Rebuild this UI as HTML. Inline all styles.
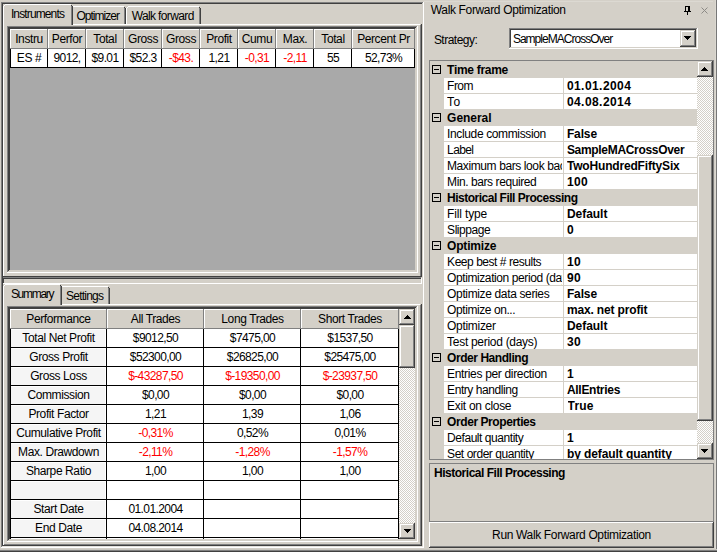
<!DOCTYPE html>
<html lang="en"><head><meta charset="utf-8"><title>Walk Forward Optimization</title>
<style>
html,body{margin:0;padding:0;background:#d4d0c8}
body{width:717px;height:552px;background:#d4d0c8;position:relative;overflow:hidden;
 font-family:"Liberation Sans",sans-serif;font-size:11px;color:#000}
.r{position:absolute}
.t{position:absolute;white-space:nowrap;font-size:12px;letter-spacing:-0.4px}
.clip{overflow:hidden}
.b{font-weight:bold;letter-spacing:-0.2px}
.red{color:#ff0000}
.num{letter-spacing:-0.6px}
.chk{background-image:repeating-conic-gradient(#fff 0% 25%,#d4d0c8 0% 50%);background-size:2px 2px}
</style></head>
<body>
<div class="r" style="left:1px;top:2px;width:1px;height:545px;background:#808080;"></div>
<div class="r" style="left:2px;top:3px;width:1px;height:543px;background:#404040;"></div>
<div class="r" style="left:1px;top:2px;width:422px;height:1px;background:#808080;"></div>
<div class="r" style="left:2px;top:3px;width:420px;height:1px;background:#404040;"></div>
<div class="r" style="left:423px;top:2px;width:1px;height:546px;background:#ffffff;"></div>
<div class="r" style="left:1px;top:547px;width:423px;height:1px;background:#ffffff;"></div>
<div class="r" style="left:2px;top:546px;width:421px;height:1px;background:#e6e3dd;"></div>
<div class="r" style="left:73px;top:24px;width:347px;height:1px;background:#ffffff;"></div>
<div class="r" style="left:3px;top:6px;width:1px;height:270px;background:#ffffff;"></div>
<div class="r" style="left:420px;top:25px;width:1px;height:251px;background:#808080;"></div>
<div class="r" style="left:421px;top:24px;width:1px;height:253px;background:#404040;"></div>
<div class="r" style="left:3px;top:276px;width:419px;height:1px;background:#404040;"></div>
<div class="r" style="left:5px;top:4px;width:66px;height:1px;background:#ffffff;"></div>
<div class="r" style="left:4px;top:5px;width:1px;height:1px;background:#ffffff;"></div>
<div class="r" style="left:71px;top:6px;width:1px;height:19px;background:#808080;"></div>
<div class="r" style="left:71px;top:5px;width:1px;height:1px;background:#404040;"></div>
<div class="r" style="left:72px;top:6px;width:1px;height:19px;background:#404040;"></div>
<div class="t " style="left:10.9px;top:7px;width:61.1px;height:15px;line-height:15px;text-align:left;letter-spacing:-0.87px;">Instruments</div>
<div class="r" style="left:73px;top:6px;width:51px;height:1px;background:#ffffff;"></div>
<div class="r" style="left:124px;top:8px;width:1px;height:16px;background:#808080;"></div>
<div class="r" style="left:124px;top:7px;width:1px;height:1px;background:#404040;"></div>
<div class="r" style="left:125px;top:8px;width:1px;height:16px;background:#404040;"></div>
<div class="t " style="left:76.4px;top:9px;width:48.599999999999994px;height:15px;line-height:15px;text-align:left;letter-spacing:-0.96px;">Optimizer</div>
<div class="r" style="left:128px;top:6px;width:71px;height:1px;background:#ffffff;"></div>
<div class="r" style="left:127px;top:7px;width:1px;height:1px;background:#ffffff;"></div>
<div class="r" style="left:126px;top:8px;width:1px;height:16px;background:#ffffff;"></div>
<div class="r" style="left:199px;top:8px;width:1px;height:16px;background:#808080;"></div>
<div class="r" style="left:199px;top:7px;width:1px;height:1px;background:#404040;"></div>
<div class="r" style="left:200px;top:8px;width:1px;height:16px;background:#404040;"></div>
<div class="t " style="left:131.7px;top:9px;width:68.30000000000001px;height:15px;line-height:15px;text-align:left;letter-spacing:-0.63px;">Walk forward</div>
<div class="r" style="left:10px;top:29px;width:405px;height:241px;background:#a9a9a9;"></div>
<div class="r" style="left:7px;top:26px;width:411px;height:1px;background:#808080;"></div>
<div class="r" style="left:8px;top:27px;width:409px;height:1px;background:#404040;"></div>
<div class="r" style="left:9px;top:28px;width:407px;height:1px;background:#404040;"></div>
<div class="r" style="left:7px;top:26px;width:1px;height:247px;background:#808080;"></div>
<div class="r" style="left:8px;top:27px;width:1px;height:245px;background:#404040;"></div>
<div class="r" style="left:9px;top:28px;width:1px;height:243px;background:#404040;"></div>
<div class="r" style="left:417px;top:26px;width:1px;height:247px;background:#ffffff;"></div>
<div class="r" style="left:7px;top:272px;width:411px;height:1px;background:#ffffff;"></div>
<div class="r" style="left:416px;top:27px;width:1px;height:245px;background:#d4d0c8;"></div>
<div class="r" style="left:415px;top:28px;width:1px;height:243px;background:#d4d0c8;"></div>
<div class="r" style="left:8px;top:271px;width:409px;height:1px;background:#d4d0c8;"></div>
<div class="r" style="left:9px;top:270px;width:407px;height:1px;background:#d4d0c8;"></div>
<div class="r" style="left:10px;top:29px;width:38px;height:20px;background:#d4d0c8;"></div>
<div class="r" style="left:10px;top:29px;width:1px;height:19px;background:#ffffff;"></div>
<div class="r" style="left:10px;top:29px;width:37px;height:1px;background:#ffffff;"></div>
<div class="r" style="left:47px;top:29px;width:1px;height:20px;background:#808080;"></div>
<div class="r" style="left:10px;top:48px;width:38px;height:1px;background:#808080;"></div>
<div class="t clip" style="left:11px;top:30px;width:36px;height:18px;line-height:18px;text-align:center;">Instru</div>
<div class="r" style="left:48px;top:29px;width:38px;height:20px;background:#d4d0c8;"></div>
<div class="r" style="left:48px;top:29px;width:1px;height:19px;background:#ffffff;"></div>
<div class="r" style="left:48px;top:29px;width:37px;height:1px;background:#ffffff;"></div>
<div class="r" style="left:85px;top:29px;width:1px;height:20px;background:#808080;"></div>
<div class="r" style="left:48px;top:48px;width:38px;height:1px;background:#808080;"></div>
<div class="t clip" style="left:49px;top:30px;width:36px;height:18px;line-height:18px;text-align:center;">Perfor</div>
<div class="r" style="left:86px;top:29px;width:38px;height:20px;background:#d4d0c8;"></div>
<div class="r" style="left:86px;top:29px;width:1px;height:19px;background:#ffffff;"></div>
<div class="r" style="left:86px;top:29px;width:37px;height:1px;background:#ffffff;"></div>
<div class="r" style="left:123px;top:29px;width:1px;height:20px;background:#808080;"></div>
<div class="r" style="left:86px;top:48px;width:38px;height:1px;background:#808080;"></div>
<div class="t clip" style="left:87px;top:30px;width:36px;height:18px;line-height:18px;text-align:center;">Total</div>
<div class="r" style="left:124px;top:29px;width:38px;height:20px;background:#d4d0c8;"></div>
<div class="r" style="left:124px;top:29px;width:1px;height:19px;background:#ffffff;"></div>
<div class="r" style="left:124px;top:29px;width:37px;height:1px;background:#ffffff;"></div>
<div class="r" style="left:161px;top:29px;width:1px;height:20px;background:#808080;"></div>
<div class="r" style="left:124px;top:48px;width:38px;height:1px;background:#808080;"></div>
<div class="t clip" style="left:125px;top:30px;width:36px;height:18px;line-height:18px;text-align:center;">Gross</div>
<div class="r" style="left:162px;top:29px;width:38px;height:20px;background:#d4d0c8;"></div>
<div class="r" style="left:162px;top:29px;width:1px;height:19px;background:#ffffff;"></div>
<div class="r" style="left:162px;top:29px;width:37px;height:1px;background:#ffffff;"></div>
<div class="r" style="left:199px;top:29px;width:1px;height:20px;background:#808080;"></div>
<div class="r" style="left:162px;top:48px;width:38px;height:1px;background:#808080;"></div>
<div class="t clip" style="left:163px;top:30px;width:36px;height:18px;line-height:18px;text-align:center;">Gross</div>
<div class="r" style="left:200px;top:29px;width:38px;height:20px;background:#d4d0c8;"></div>
<div class="r" style="left:200px;top:29px;width:1px;height:19px;background:#ffffff;"></div>
<div class="r" style="left:200px;top:29px;width:37px;height:1px;background:#ffffff;"></div>
<div class="r" style="left:237px;top:29px;width:1px;height:20px;background:#808080;"></div>
<div class="r" style="left:200px;top:48px;width:38px;height:1px;background:#808080;"></div>
<div class="t clip" style="left:201px;top:30px;width:36px;height:18px;line-height:18px;text-align:center;">Profit</div>
<div class="r" style="left:238px;top:29px;width:38px;height:20px;background:#d4d0c8;"></div>
<div class="r" style="left:238px;top:29px;width:1px;height:19px;background:#ffffff;"></div>
<div class="r" style="left:238px;top:29px;width:37px;height:1px;background:#ffffff;"></div>
<div class="r" style="left:275px;top:29px;width:1px;height:20px;background:#808080;"></div>
<div class="r" style="left:238px;top:48px;width:38px;height:1px;background:#808080;"></div>
<div class="t clip" style="left:239px;top:30px;width:36px;height:18px;line-height:18px;text-align:center;">Cumu</div>
<div class="r" style="left:276px;top:29px;width:38px;height:20px;background:#d4d0c8;"></div>
<div class="r" style="left:276px;top:29px;width:1px;height:19px;background:#ffffff;"></div>
<div class="r" style="left:276px;top:29px;width:37px;height:1px;background:#ffffff;"></div>
<div class="r" style="left:313px;top:29px;width:1px;height:20px;background:#808080;"></div>
<div class="r" style="left:276px;top:48px;width:38px;height:1px;background:#808080;"></div>
<div class="t clip" style="left:277px;top:30px;width:36px;height:18px;line-height:18px;text-align:center;">Max.</div>
<div class="r" style="left:314px;top:29px;width:38px;height:20px;background:#d4d0c8;"></div>
<div class="r" style="left:314px;top:29px;width:1px;height:19px;background:#ffffff;"></div>
<div class="r" style="left:314px;top:29px;width:37px;height:1px;background:#ffffff;"></div>
<div class="r" style="left:351px;top:29px;width:1px;height:20px;background:#808080;"></div>
<div class="r" style="left:314px;top:48px;width:38px;height:1px;background:#808080;"></div>
<div class="t clip" style="left:315px;top:30px;width:36px;height:18px;line-height:18px;text-align:center;">Total</div>
<div class="r" style="left:352px;top:29px;width:63px;height:20px;background:#d4d0c8;"></div>
<div class="r" style="left:352px;top:29px;width:1px;height:19px;background:#ffffff;"></div>
<div class="r" style="left:352px;top:29px;width:62px;height:1px;background:#ffffff;"></div>
<div class="r" style="left:414px;top:29px;width:1px;height:20px;background:#808080;"></div>
<div class="r" style="left:352px;top:48px;width:63px;height:1px;background:#808080;"></div>
<div class="t clip" style="left:353px;top:30px;width:61px;height:18px;line-height:18px;text-align:center;">Percent Pr</div>
<div class="r" style="left:10px;top:49px;width:38px;height:19px;background:#ffffff;"></div>
<div class="r" style="left:47px;top:49px;width:1px;height:19px;background:#000000;"></div>
<div class="r" style="left:10px;top:67px;width:38px;height:1px;background:#000000;"></div>
<div class="r" style="left:10px;top:49px;width:1px;height:19px;background:#000000;"></div>
<div class="t clip" style="left:11px;top:49px;width:36px;height:18px;line-height:18px;text-align:center;">ES #</div>
<div class="r" style="left:48px;top:49px;width:38px;height:19px;background:#ffffff;"></div>
<div class="r" style="left:85px;top:49px;width:1px;height:19px;background:#000000;"></div>
<div class="r" style="left:48px;top:67px;width:38px;height:1px;background:#000000;"></div>
<div class="t clip num" style="left:49px;top:49px;width:36px;height:18px;line-height:18px;text-align:center;">9012,</div>
<div class="r" style="left:86px;top:49px;width:38px;height:19px;background:#ffffff;"></div>
<div class="r" style="left:123px;top:49px;width:1px;height:19px;background:#000000;"></div>
<div class="r" style="left:86px;top:67px;width:38px;height:1px;background:#000000;"></div>
<div class="t clip num" style="left:87px;top:49px;width:36px;height:18px;line-height:18px;text-align:center;">$9.01</div>
<div class="r" style="left:124px;top:49px;width:38px;height:19px;background:#ffffff;"></div>
<div class="r" style="left:161px;top:49px;width:1px;height:19px;background:#000000;"></div>
<div class="r" style="left:124px;top:67px;width:38px;height:1px;background:#000000;"></div>
<div class="t clip num" style="left:125px;top:49px;width:36px;height:18px;line-height:18px;text-align:center;">$52.3</div>
<div class="r" style="left:162px;top:49px;width:38px;height:19px;background:#ffffff;"></div>
<div class="r" style="left:199px;top:49px;width:1px;height:19px;background:#000000;"></div>
<div class="r" style="left:162px;top:67px;width:38px;height:1px;background:#000000;"></div>
<div class="t clip red num" style="left:163px;top:49px;width:36px;height:18px;line-height:18px;text-align:center;">-$43.</div>
<div class="r" style="left:200px;top:49px;width:38px;height:19px;background:#ffffff;"></div>
<div class="r" style="left:237px;top:49px;width:1px;height:19px;background:#000000;"></div>
<div class="r" style="left:200px;top:67px;width:38px;height:1px;background:#000000;"></div>
<div class="t clip num" style="left:201px;top:49px;width:36px;height:18px;line-height:18px;text-align:center;">1,21</div>
<div class="r" style="left:238px;top:49px;width:38px;height:19px;background:#ffffff;"></div>
<div class="r" style="left:275px;top:49px;width:1px;height:19px;background:#000000;"></div>
<div class="r" style="left:238px;top:67px;width:38px;height:1px;background:#000000;"></div>
<div class="t clip red num" style="left:239px;top:49px;width:36px;height:18px;line-height:18px;text-align:center;">-0,31</div>
<div class="r" style="left:276px;top:49px;width:38px;height:19px;background:#ffffff;"></div>
<div class="r" style="left:313px;top:49px;width:1px;height:19px;background:#000000;"></div>
<div class="r" style="left:276px;top:67px;width:38px;height:1px;background:#000000;"></div>
<div class="t clip red num" style="left:277px;top:49px;width:36px;height:18px;line-height:18px;text-align:center;">-2,11</div>
<div class="r" style="left:314px;top:49px;width:38px;height:19px;background:#ffffff;"></div>
<div class="r" style="left:351px;top:49px;width:1px;height:19px;background:#000000;"></div>
<div class="r" style="left:314px;top:67px;width:38px;height:1px;background:#000000;"></div>
<div class="t clip num" style="left:315px;top:49px;width:36px;height:18px;line-height:18px;text-align:center;">55</div>
<div class="r" style="left:352px;top:49px;width:63px;height:19px;background:#ffffff;"></div>
<div class="r" style="left:414px;top:49px;width:1px;height:19px;background:#000000;"></div>
<div class="r" style="left:352px;top:67px;width:63px;height:1px;background:#000000;"></div>
<div class="t clip num" style="left:353px;top:49px;width:61px;height:18px;line-height:18px;text-align:center;">52,73%</div>
<div class="r" style="left:3px;top:276px;width:419px;height:1px;background:#404040;"></div>
<div class="r" style="left:3px;top:277px;width:418px;height:1px;background:#808080;"></div>
<div class="r" style="left:3px;top:278px;width:418px;height:1px;background:#404040;"></div>
<div class="r" style="left:3px;top:279px;width:1px;height:4px;background:#404040;"></div>
<div class="r" style="left:3px;top:283px;width:419px;height:1px;background:#ffffff;"></div>
<div class="r" style="left:421px;top:278px;width:1px;height:6px;background:#ffffff;"></div>
<div class="r" style="left:62px;top:304px;width:358px;height:1px;background:#ffffff;"></div>
<div class="r" style="left:3px;top:286px;width:1px;height:259px;background:#ffffff;"></div>
<div class="r" style="left:420px;top:305px;width:1px;height:240px;background:#808080;"></div>
<div class="r" style="left:421px;top:304px;width:1px;height:242px;background:#404040;"></div>
<div class="r" style="left:4px;top:544px;width:417px;height:1px;background:#808080;"></div>
<div class="r" style="left:3px;top:545px;width:419px;height:1px;background:#404040;"></div>
<div class="r" style="left:5px;top:284px;width:55px;height:1px;background:#ffffff;"></div>
<div class="r" style="left:4px;top:285px;width:1px;height:1px;background:#ffffff;"></div>
<div class="r" style="left:60px;top:286px;width:1px;height:19px;background:#808080;"></div>
<div class="r" style="left:60px;top:285px;width:1px;height:1px;background:#404040;"></div>
<div class="r" style="left:61px;top:286px;width:1px;height:19px;background:#404040;"></div>
<div class="t " style="left:10.9px;top:287px;width:50.1px;height:15px;line-height:15px;text-align:left;letter-spacing:-1.29px;">Summary</div>
<div class="r" style="left:62px;top:286px;width:46px;height:1px;background:#ffffff;"></div>
<div class="r" style="left:108px;top:288px;width:1px;height:16px;background:#808080;"></div>
<div class="r" style="left:108px;top:287px;width:1px;height:1px;background:#404040;"></div>
<div class="r" style="left:109px;top:288px;width:1px;height:16px;background:#404040;"></div>
<div class="t " style="left:66.1px;top:289px;width:42.900000000000006px;height:15px;line-height:15px;text-align:left;letter-spacing:-0.79px;">Settings</div>
<div class="r" style="left:10px;top:309px;width:405px;height:230px;background:#a9a9a9;"></div>
<div class="r" style="left:7px;top:306px;width:411px;height:1px;background:#808080;"></div>
<div class="r" style="left:8px;top:307px;width:409px;height:1px;background:#404040;"></div>
<div class="r" style="left:9px;top:308px;width:407px;height:1px;background:#404040;"></div>
<div class="r" style="left:7px;top:306px;width:1px;height:236px;background:#808080;"></div>
<div class="r" style="left:8px;top:307px;width:1px;height:234px;background:#404040;"></div>
<div class="r" style="left:9px;top:308px;width:1px;height:232px;background:#404040;"></div>
<div class="r" style="left:417px;top:306px;width:1px;height:236px;background:#ffffff;"></div>
<div class="r" style="left:7px;top:541px;width:411px;height:1px;background:#ffffff;"></div>
<div class="r" style="left:416px;top:307px;width:1px;height:234px;background:#d4d0c8;"></div>
<div class="r" style="left:415px;top:308px;width:1px;height:232px;background:#d4d0c8;"></div>
<div class="r" style="left:8px;top:540px;width:409px;height:1px;background:#d4d0c8;"></div>
<div class="r" style="left:9px;top:539px;width:407px;height:1px;background:#d4d0c8;"></div>
<div class="r" style="left:10px;top:309px;width:97px;height:20px;background:#d4d0c8;"></div>
<div class="r" style="left:10px;top:309px;width:1px;height:19px;background:#ffffff;"></div>
<div class="r" style="left:10px;top:309px;width:96px;height:1px;background:#ffffff;"></div>
<div class="r" style="left:106px;top:309px;width:1px;height:20px;background:#808080;"></div>
<div class="r" style="left:10px;top:328px;width:97px;height:1px;background:#808080;"></div>
<div class="t clip" style="left:11px;top:310px;width:95px;height:18px;line-height:18px;text-align:center;">Performance</div>
<div class="r" style="left:107px;top:309px;width:97px;height:20px;background:#d4d0c8;"></div>
<div class="r" style="left:107px;top:309px;width:1px;height:19px;background:#ffffff;"></div>
<div class="r" style="left:107px;top:309px;width:96px;height:1px;background:#ffffff;"></div>
<div class="r" style="left:203px;top:309px;width:1px;height:20px;background:#808080;"></div>
<div class="r" style="left:107px;top:328px;width:97px;height:1px;background:#808080;"></div>
<div class="t clip" style="left:108px;top:310px;width:95px;height:18px;line-height:18px;text-align:center;">All Trades</div>
<div class="r" style="left:204px;top:309px;width:97px;height:20px;background:#d4d0c8;"></div>
<div class="r" style="left:204px;top:309px;width:1px;height:19px;background:#ffffff;"></div>
<div class="r" style="left:204px;top:309px;width:96px;height:1px;background:#ffffff;"></div>
<div class="r" style="left:300px;top:309px;width:1px;height:20px;background:#808080;"></div>
<div class="r" style="left:204px;top:328px;width:97px;height:1px;background:#808080;"></div>
<div class="t clip" style="left:205px;top:310px;width:95px;height:18px;line-height:18px;text-align:center;">Long Trades</div>
<div class="r" style="left:301px;top:309px;width:98px;height:20px;background:#d4d0c8;"></div>
<div class="r" style="left:301px;top:309px;width:1px;height:19px;background:#ffffff;"></div>
<div class="r" style="left:301px;top:309px;width:97px;height:1px;background:#ffffff;"></div>
<div class="r" style="left:398px;top:309px;width:1px;height:20px;background:#808080;"></div>
<div class="r" style="left:301px;top:328px;width:98px;height:1px;background:#808080;"></div>
<div class="t clip" style="left:302px;top:310px;width:96px;height:18px;line-height:18px;text-align:center;">Short Trades</div>
<div class="r" style="left:10px;top:329px;width:97px;height:19px;background:#ffffff;"></div>
<div class="r" style="left:11px;top:330px;width:94px;height:17px;background:#f5f5f5;"></div>
<div class="r" style="left:106px;top:329px;width:1px;height:19px;background:#000000;"></div>
<div class="r" style="left:10px;top:347px;width:97px;height:1px;background:#000000;"></div>
<div class="r" style="left:10px;top:329px;width:1px;height:19px;background:#000000;"></div>
<div class="t clip" style="left:11px;top:329px;width:95px;height:18px;line-height:18px;text-align:center;">Total Net Profit</div>
<div class="r" style="left:107px;top:329px;width:97px;height:19px;background:#ffffff;"></div>
<div class="r" style="left:203px;top:329px;width:1px;height:19px;background:#000000;"></div>
<div class="r" style="left:107px;top:347px;width:97px;height:1px;background:#000000;"></div>
<div class="t clip num" style="left:108px;top:329px;width:95px;height:18px;line-height:18px;text-align:center;">$9012,50</div>
<div class="r" style="left:204px;top:329px;width:97px;height:19px;background:#ffffff;"></div>
<div class="r" style="left:300px;top:329px;width:1px;height:19px;background:#000000;"></div>
<div class="r" style="left:204px;top:347px;width:97px;height:1px;background:#000000;"></div>
<div class="t clip num" style="left:205px;top:329px;width:95px;height:18px;line-height:18px;text-align:center;">$7475,00</div>
<div class="r" style="left:301px;top:329px;width:98px;height:19px;background:#ffffff;"></div>
<div class="r" style="left:398px;top:329px;width:1px;height:19px;background:#000000;"></div>
<div class="r" style="left:301px;top:347px;width:98px;height:1px;background:#000000;"></div>
<div class="t clip num" style="left:302px;top:329px;width:96px;height:18px;line-height:18px;text-align:center;">$1537,50</div>
<div class="r" style="left:10px;top:348px;width:97px;height:19px;background:#ffffff;"></div>
<div class="r" style="left:11px;top:349px;width:94px;height:17px;background:#f5f5f5;"></div>
<div class="r" style="left:106px;top:348px;width:1px;height:19px;background:#000000;"></div>
<div class="r" style="left:10px;top:366px;width:97px;height:1px;background:#000000;"></div>
<div class="r" style="left:10px;top:348px;width:1px;height:19px;background:#000000;"></div>
<div class="t clip" style="left:11px;top:348px;width:95px;height:18px;line-height:18px;text-align:center;">Gross Profit</div>
<div class="r" style="left:107px;top:348px;width:97px;height:19px;background:#ffffff;"></div>
<div class="r" style="left:203px;top:348px;width:1px;height:19px;background:#000000;"></div>
<div class="r" style="left:107px;top:366px;width:97px;height:1px;background:#000000;"></div>
<div class="t clip num" style="left:108px;top:348px;width:95px;height:18px;line-height:18px;text-align:center;">$52300,00</div>
<div class="r" style="left:204px;top:348px;width:97px;height:19px;background:#ffffff;"></div>
<div class="r" style="left:300px;top:348px;width:1px;height:19px;background:#000000;"></div>
<div class="r" style="left:204px;top:366px;width:97px;height:1px;background:#000000;"></div>
<div class="t clip num" style="left:205px;top:348px;width:95px;height:18px;line-height:18px;text-align:center;">$26825,00</div>
<div class="r" style="left:301px;top:348px;width:98px;height:19px;background:#ffffff;"></div>
<div class="r" style="left:398px;top:348px;width:1px;height:19px;background:#000000;"></div>
<div class="r" style="left:301px;top:366px;width:98px;height:1px;background:#000000;"></div>
<div class="t clip num" style="left:302px;top:348px;width:96px;height:18px;line-height:18px;text-align:center;">$25475,00</div>
<div class="r" style="left:10px;top:367px;width:97px;height:19px;background:#ffffff;"></div>
<div class="r" style="left:11px;top:368px;width:94px;height:17px;background:#f5f5f5;"></div>
<div class="r" style="left:106px;top:367px;width:1px;height:19px;background:#000000;"></div>
<div class="r" style="left:10px;top:385px;width:97px;height:1px;background:#000000;"></div>
<div class="r" style="left:10px;top:367px;width:1px;height:19px;background:#000000;"></div>
<div class="t clip" style="left:11px;top:367px;width:95px;height:18px;line-height:18px;text-align:center;">Gross Loss</div>
<div class="r" style="left:107px;top:367px;width:97px;height:19px;background:#ffffff;"></div>
<div class="r" style="left:203px;top:367px;width:1px;height:19px;background:#000000;"></div>
<div class="r" style="left:107px;top:385px;width:97px;height:1px;background:#000000;"></div>
<div class="t clip red num" style="left:108px;top:367px;width:95px;height:18px;line-height:18px;text-align:center;">$-43287,50</div>
<div class="r" style="left:204px;top:367px;width:97px;height:19px;background:#ffffff;"></div>
<div class="r" style="left:300px;top:367px;width:1px;height:19px;background:#000000;"></div>
<div class="r" style="left:204px;top:385px;width:97px;height:1px;background:#000000;"></div>
<div class="t clip red num" style="left:205px;top:367px;width:95px;height:18px;line-height:18px;text-align:center;">$-19350,00</div>
<div class="r" style="left:301px;top:367px;width:98px;height:19px;background:#ffffff;"></div>
<div class="r" style="left:398px;top:367px;width:1px;height:19px;background:#000000;"></div>
<div class="r" style="left:301px;top:385px;width:98px;height:1px;background:#000000;"></div>
<div class="t clip red num" style="left:302px;top:367px;width:96px;height:18px;line-height:18px;text-align:center;">$-23937,50</div>
<div class="r" style="left:10px;top:386px;width:97px;height:19px;background:#ffffff;"></div>
<div class="r" style="left:11px;top:387px;width:94px;height:17px;background:#f5f5f5;"></div>
<div class="r" style="left:106px;top:386px;width:1px;height:19px;background:#000000;"></div>
<div class="r" style="left:10px;top:404px;width:97px;height:1px;background:#000000;"></div>
<div class="r" style="left:10px;top:386px;width:1px;height:19px;background:#000000;"></div>
<div class="t clip" style="left:11px;top:386px;width:95px;height:18px;line-height:18px;text-align:center;">Commission</div>
<div class="r" style="left:107px;top:386px;width:97px;height:19px;background:#ffffff;"></div>
<div class="r" style="left:203px;top:386px;width:1px;height:19px;background:#000000;"></div>
<div class="r" style="left:107px;top:404px;width:97px;height:1px;background:#000000;"></div>
<div class="t clip num" style="left:108px;top:386px;width:95px;height:18px;line-height:18px;text-align:center;">$0,00</div>
<div class="r" style="left:204px;top:386px;width:97px;height:19px;background:#ffffff;"></div>
<div class="r" style="left:300px;top:386px;width:1px;height:19px;background:#000000;"></div>
<div class="r" style="left:204px;top:404px;width:97px;height:1px;background:#000000;"></div>
<div class="t clip num" style="left:205px;top:386px;width:95px;height:18px;line-height:18px;text-align:center;">$0,00</div>
<div class="r" style="left:301px;top:386px;width:98px;height:19px;background:#ffffff;"></div>
<div class="r" style="left:398px;top:386px;width:1px;height:19px;background:#000000;"></div>
<div class="r" style="left:301px;top:404px;width:98px;height:1px;background:#000000;"></div>
<div class="t clip num" style="left:302px;top:386px;width:96px;height:18px;line-height:18px;text-align:center;">$0,00</div>
<div class="r" style="left:10px;top:405px;width:97px;height:19px;background:#ffffff;"></div>
<div class="r" style="left:11px;top:406px;width:94px;height:17px;background:#f5f5f5;"></div>
<div class="r" style="left:106px;top:405px;width:1px;height:19px;background:#000000;"></div>
<div class="r" style="left:10px;top:423px;width:97px;height:1px;background:#000000;"></div>
<div class="r" style="left:10px;top:405px;width:1px;height:19px;background:#000000;"></div>
<div class="t clip" style="left:11px;top:405px;width:95px;height:18px;line-height:18px;text-align:center;">Profit Factor</div>
<div class="r" style="left:107px;top:405px;width:97px;height:19px;background:#ffffff;"></div>
<div class="r" style="left:203px;top:405px;width:1px;height:19px;background:#000000;"></div>
<div class="r" style="left:107px;top:423px;width:97px;height:1px;background:#000000;"></div>
<div class="t clip num" style="left:108px;top:405px;width:95px;height:18px;line-height:18px;text-align:center;">1,21</div>
<div class="r" style="left:204px;top:405px;width:97px;height:19px;background:#ffffff;"></div>
<div class="r" style="left:300px;top:405px;width:1px;height:19px;background:#000000;"></div>
<div class="r" style="left:204px;top:423px;width:97px;height:1px;background:#000000;"></div>
<div class="t clip num" style="left:205px;top:405px;width:95px;height:18px;line-height:18px;text-align:center;">1,39</div>
<div class="r" style="left:301px;top:405px;width:98px;height:19px;background:#ffffff;"></div>
<div class="r" style="left:398px;top:405px;width:1px;height:19px;background:#000000;"></div>
<div class="r" style="left:301px;top:423px;width:98px;height:1px;background:#000000;"></div>
<div class="t clip num" style="left:302px;top:405px;width:96px;height:18px;line-height:18px;text-align:center;">1,06</div>
<div class="r" style="left:10px;top:424px;width:97px;height:19px;background:#ffffff;"></div>
<div class="r" style="left:11px;top:425px;width:94px;height:17px;background:#f5f5f5;"></div>
<div class="r" style="left:106px;top:424px;width:1px;height:19px;background:#000000;"></div>
<div class="r" style="left:10px;top:442px;width:97px;height:1px;background:#000000;"></div>
<div class="r" style="left:10px;top:424px;width:1px;height:19px;background:#000000;"></div>
<div class="t clip" style="left:11px;top:424px;width:95px;height:18px;line-height:18px;text-align:center;">Cumulative Profit</div>
<div class="r" style="left:107px;top:424px;width:97px;height:19px;background:#ffffff;"></div>
<div class="r" style="left:203px;top:424px;width:1px;height:19px;background:#000000;"></div>
<div class="r" style="left:107px;top:442px;width:97px;height:1px;background:#000000;"></div>
<div class="t clip red num" style="left:108px;top:424px;width:95px;height:18px;line-height:18px;text-align:center;">-0,31%</div>
<div class="r" style="left:204px;top:424px;width:97px;height:19px;background:#ffffff;"></div>
<div class="r" style="left:300px;top:424px;width:1px;height:19px;background:#000000;"></div>
<div class="r" style="left:204px;top:442px;width:97px;height:1px;background:#000000;"></div>
<div class="t clip num" style="left:205px;top:424px;width:95px;height:18px;line-height:18px;text-align:center;">0,52%</div>
<div class="r" style="left:301px;top:424px;width:98px;height:19px;background:#ffffff;"></div>
<div class="r" style="left:398px;top:424px;width:1px;height:19px;background:#000000;"></div>
<div class="r" style="left:301px;top:442px;width:98px;height:1px;background:#000000;"></div>
<div class="t clip num" style="left:302px;top:424px;width:96px;height:18px;line-height:18px;text-align:center;">0,01%</div>
<div class="r" style="left:10px;top:443px;width:97px;height:19px;background:#ffffff;"></div>
<div class="r" style="left:11px;top:444px;width:94px;height:17px;background:#f5f5f5;"></div>
<div class="r" style="left:106px;top:443px;width:1px;height:19px;background:#000000;"></div>
<div class="r" style="left:10px;top:461px;width:97px;height:1px;background:#000000;"></div>
<div class="r" style="left:10px;top:443px;width:1px;height:19px;background:#000000;"></div>
<div class="t clip" style="left:11px;top:443px;width:95px;height:18px;line-height:18px;text-align:center;">Max. Drawdown</div>
<div class="r" style="left:107px;top:443px;width:97px;height:19px;background:#ffffff;"></div>
<div class="r" style="left:203px;top:443px;width:1px;height:19px;background:#000000;"></div>
<div class="r" style="left:107px;top:461px;width:97px;height:1px;background:#000000;"></div>
<div class="t clip red num" style="left:108px;top:443px;width:95px;height:18px;line-height:18px;text-align:center;">-2,11%</div>
<div class="r" style="left:204px;top:443px;width:97px;height:19px;background:#ffffff;"></div>
<div class="r" style="left:300px;top:443px;width:1px;height:19px;background:#000000;"></div>
<div class="r" style="left:204px;top:461px;width:97px;height:1px;background:#000000;"></div>
<div class="t clip red num" style="left:205px;top:443px;width:95px;height:18px;line-height:18px;text-align:center;">-1,28%</div>
<div class="r" style="left:301px;top:443px;width:98px;height:19px;background:#ffffff;"></div>
<div class="r" style="left:398px;top:443px;width:1px;height:19px;background:#000000;"></div>
<div class="r" style="left:301px;top:461px;width:98px;height:1px;background:#000000;"></div>
<div class="t clip red num" style="left:302px;top:443px;width:96px;height:18px;line-height:18px;text-align:center;">-1,57%</div>
<div class="r" style="left:10px;top:462px;width:97px;height:19px;background:#ffffff;"></div>
<div class="r" style="left:11px;top:463px;width:94px;height:17px;background:#f5f5f5;"></div>
<div class="r" style="left:106px;top:462px;width:1px;height:19px;background:#000000;"></div>
<div class="r" style="left:10px;top:480px;width:97px;height:1px;background:#000000;"></div>
<div class="r" style="left:10px;top:462px;width:1px;height:19px;background:#000000;"></div>
<div class="t clip" style="left:11px;top:462px;width:95px;height:18px;line-height:18px;text-align:center;">Sharpe Ratio</div>
<div class="r" style="left:107px;top:462px;width:97px;height:19px;background:#ffffff;"></div>
<div class="r" style="left:203px;top:462px;width:1px;height:19px;background:#000000;"></div>
<div class="r" style="left:107px;top:480px;width:97px;height:1px;background:#000000;"></div>
<div class="t clip num" style="left:108px;top:462px;width:95px;height:18px;line-height:18px;text-align:center;">1,00</div>
<div class="r" style="left:204px;top:462px;width:97px;height:19px;background:#ffffff;"></div>
<div class="r" style="left:300px;top:462px;width:1px;height:19px;background:#000000;"></div>
<div class="r" style="left:204px;top:480px;width:97px;height:1px;background:#000000;"></div>
<div class="t clip num" style="left:205px;top:462px;width:95px;height:18px;line-height:18px;text-align:center;">1,00</div>
<div class="r" style="left:301px;top:462px;width:98px;height:19px;background:#ffffff;"></div>
<div class="r" style="left:398px;top:462px;width:1px;height:19px;background:#000000;"></div>
<div class="r" style="left:301px;top:480px;width:98px;height:1px;background:#000000;"></div>
<div class="t clip num" style="left:302px;top:462px;width:96px;height:18px;line-height:18px;text-align:center;">1,00</div>
<div class="r" style="left:10px;top:481px;width:97px;height:19px;background:#ffffff;"></div>
<div class="r" style="left:11px;top:482px;width:94px;height:17px;background:#f5f5f5;"></div>
<div class="r" style="left:106px;top:481px;width:1px;height:19px;background:#000000;"></div>
<div class="r" style="left:10px;top:499px;width:97px;height:1px;background:#000000;"></div>
<div class="r" style="left:10px;top:481px;width:1px;height:19px;background:#000000;"></div>
<div class="r" style="left:107px;top:481px;width:97px;height:19px;background:#ffffff;"></div>
<div class="r" style="left:203px;top:481px;width:1px;height:19px;background:#000000;"></div>
<div class="r" style="left:107px;top:499px;width:97px;height:1px;background:#000000;"></div>
<div class="r" style="left:204px;top:481px;width:97px;height:19px;background:#ffffff;"></div>
<div class="r" style="left:300px;top:481px;width:1px;height:19px;background:#000000;"></div>
<div class="r" style="left:204px;top:499px;width:97px;height:1px;background:#000000;"></div>
<div class="r" style="left:301px;top:481px;width:98px;height:19px;background:#ffffff;"></div>
<div class="r" style="left:398px;top:481px;width:1px;height:19px;background:#000000;"></div>
<div class="r" style="left:301px;top:499px;width:98px;height:1px;background:#000000;"></div>
<div class="r" style="left:10px;top:500px;width:97px;height:19px;background:#ffffff;"></div>
<div class="r" style="left:11px;top:501px;width:94px;height:17px;background:#f5f5f5;"></div>
<div class="r" style="left:106px;top:500px;width:1px;height:19px;background:#000000;"></div>
<div class="r" style="left:10px;top:518px;width:97px;height:1px;background:#000000;"></div>
<div class="r" style="left:10px;top:500px;width:1px;height:19px;background:#000000;"></div>
<div class="t clip" style="left:11px;top:500px;width:95px;height:18px;line-height:18px;text-align:center;">Start Date</div>
<div class="r" style="left:107px;top:500px;width:97px;height:19px;background:#ffffff;"></div>
<div class="r" style="left:203px;top:500px;width:1px;height:19px;background:#000000;"></div>
<div class="r" style="left:107px;top:518px;width:97px;height:1px;background:#000000;"></div>
<div class="t clip num" style="left:108px;top:500px;width:95px;height:18px;line-height:18px;text-align:center;">01.01.2004</div>
<div class="r" style="left:204px;top:500px;width:97px;height:19px;background:#ffffff;"></div>
<div class="r" style="left:300px;top:500px;width:1px;height:19px;background:#000000;"></div>
<div class="r" style="left:204px;top:518px;width:97px;height:1px;background:#000000;"></div>
<div class="r" style="left:301px;top:500px;width:98px;height:19px;background:#ffffff;"></div>
<div class="r" style="left:398px;top:500px;width:1px;height:19px;background:#000000;"></div>
<div class="r" style="left:301px;top:518px;width:98px;height:1px;background:#000000;"></div>
<div class="r" style="left:10px;top:519px;width:97px;height:19px;background:#ffffff;"></div>
<div class="r" style="left:11px;top:520px;width:94px;height:17px;background:#f5f5f5;"></div>
<div class="r" style="left:106px;top:519px;width:1px;height:19px;background:#000000;"></div>
<div class="r" style="left:10px;top:537px;width:97px;height:1px;background:#000000;"></div>
<div class="r" style="left:10px;top:519px;width:1px;height:19px;background:#000000;"></div>
<div class="t clip" style="left:11px;top:519px;width:95px;height:18px;line-height:18px;text-align:center;">End Date</div>
<div class="r" style="left:107px;top:519px;width:97px;height:19px;background:#ffffff;"></div>
<div class="r" style="left:203px;top:519px;width:1px;height:19px;background:#000000;"></div>
<div class="r" style="left:107px;top:537px;width:97px;height:1px;background:#000000;"></div>
<div class="t clip num" style="left:108px;top:519px;width:95px;height:18px;line-height:18px;text-align:center;">04.08.2014</div>
<div class="r" style="left:204px;top:519px;width:97px;height:19px;background:#ffffff;"></div>
<div class="r" style="left:300px;top:519px;width:1px;height:19px;background:#000000;"></div>
<div class="r" style="left:204px;top:537px;width:97px;height:1px;background:#000000;"></div>
<div class="r" style="left:301px;top:519px;width:98px;height:19px;background:#ffffff;"></div>
<div class="r" style="left:398px;top:519px;width:1px;height:19px;background:#000000;"></div>
<div class="r" style="left:301px;top:537px;width:98px;height:1px;background:#000000;"></div>
<div class="r" style="left:10px;top:538px;width:389px;height:1px;background:#ffffff;"></div>
<div class="r" style="left:10px;top:538px;width:1px;height:1px;background:#000000;"></div>
<div class="r" style="left:106px;top:538px;width:1px;height:1px;background:#000000;"></div>
<div class="r" style="left:203px;top:538px;width:1px;height:1px;background:#000000;"></div>
<div class="r" style="left:300px;top:538px;width:1px;height:1px;background:#000000;"></div>
<div class="r" style="left:398px;top:538px;width:1px;height:1px;background:#000000;"></div>
<div class="r chk" style="left:399px;top:309px;width:16px;height:230px;background-position:-1px -1px"></div>
<div class="r" style="left:399px;top:309px;width:16px;height:16px;background:#d4d0c8;"></div>
<div class="r" style="left:399px;top:324px;width:16px;height:1px;background:#404040;"></div>
<div class="r" style="left:414px;top:309px;width:1px;height:16px;background:#404040;"></div>
<div class="r" style="left:400px;top:323px;width:14px;height:1px;background:#808080;"></div>
<div class="r" style="left:413px;top:310px;width:1px;height:14px;background:#808080;"></div>
<div class="r" style="left:400px;top:310px;width:13px;height:1px;background:#ffffff;"></div>
<div class="r" style="left:400px;top:310px;width:1px;height:13px;background:#ffffff;"></div>
<div class="r" style="left:407px;top:315px;width:1px;height:1px;background:#000000;"></div>
<div class="r" style="left:406px;top:316px;width:3px;height:1px;background:#000000;"></div>
<div class="r" style="left:405px;top:317px;width:5px;height:1px;background:#000000;"></div>
<div class="r" style="left:404px;top:318px;width:7px;height:1px;background:#000000;"></div>
<div class="r" style="left:399px;top:325px;width:16px;height:43px;background:#d4d0c8;"></div>
<div class="r" style="left:399px;top:367px;width:16px;height:1px;background:#404040;"></div>
<div class="r" style="left:414px;top:325px;width:1px;height:43px;background:#404040;"></div>
<div class="r" style="left:400px;top:366px;width:14px;height:1px;background:#808080;"></div>
<div class="r" style="left:413px;top:326px;width:1px;height:41px;background:#808080;"></div>
<div class="r" style="left:400px;top:326px;width:13px;height:1px;background:#ffffff;"></div>
<div class="r" style="left:400px;top:326px;width:1px;height:40px;background:#ffffff;"></div>
<div class="r" style="left:399px;top:523px;width:16px;height:16px;background:#d4d0c8;"></div>
<div class="r" style="left:399px;top:538px;width:16px;height:1px;background:#404040;"></div>
<div class="r" style="left:414px;top:523px;width:1px;height:16px;background:#404040;"></div>
<div class="r" style="left:400px;top:537px;width:14px;height:1px;background:#808080;"></div>
<div class="r" style="left:413px;top:524px;width:1px;height:14px;background:#808080;"></div>
<div class="r" style="left:400px;top:524px;width:13px;height:1px;background:#ffffff;"></div>
<div class="r" style="left:400px;top:524px;width:1px;height:13px;background:#ffffff;"></div>
<div class="r" style="left:404px;top:529px;width:7px;height:1px;background:#000000;"></div>
<div class="r" style="left:405px;top:530px;width:5px;height:1px;background:#000000;"></div>
<div class="r" style="left:406px;top:531px;width:3px;height:1px;background:#000000;"></div>
<div class="r" style="left:407px;top:532px;width:1px;height:1px;background:#000000;"></div>
<div class="t " style="left:430.8px;top:3px;width:200.2px;height:15px;line-height:15px;text-align:left;letter-spacing:-0.35px;">Walk Forward Optimization</div>
<div class="r" style="left:685px;top:6px;width:5px;height:1px;background:#000000;"></div>
<div class="r" style="left:685px;top:7px;width:1px;height:4px;background:#000000;"></div>
<div class="r" style="left:688px;top:7px;width:1px;height:4px;background:#000000;"></div>
<div class="r" style="left:689px;top:7px;width:1px;height:4px;background:#000000;"></div>
<div class="r" style="left:684px;top:11px;width:7px;height:1px;background:#000000;"></div>
<div class="r" style="left:687px;top:12px;width:1px;height:3px;background:#000000;"></div>
<svg class="r" style="left:701px;top:7px" width="7" height="7" viewBox="0 0 7 7"><path d="M0.5 0.5 L6.5 6.5 M6.5 0.5 L0.5 6.5" stroke="#8c8a86" stroke-width="1" fill="none"/></svg>
<div class="r" style="left:716px;top:0px;width:1px;height:552px;background:#777777;"></div>
<div class="r" style="left:715px;top:0px;width:1px;height:549px;background:#dbd8d1;"></div>
<div class="r" style="left:424px;top:1px;width:289px;height:1px;background:#dcd9d2;"></div>
<div class="t " style="left:433.9px;top:33px;width:70.10000000000002px;height:15px;line-height:15px;text-align:left;letter-spacing:-0.52px;">Strategy:</div>
<div class="r" style="left:509px;top:28px;width:189px;height:21px;background:#ffffff;"></div>
<div class="r" style="left:509px;top:28px;width:188px;height:1px;background:#808080;"></div>
<div class="r" style="left:509px;top:28px;width:1px;height:20px;background:#808080;"></div>
<div class="r" style="left:510px;top:29px;width:186px;height:1px;background:#404040;"></div>
<div class="r" style="left:510px;top:29px;width:1px;height:18px;background:#404040;"></div>
<div class="r" style="left:510px;top:47px;width:187px;height:1px;background:#d4d0c8;"></div>
<div class="r" style="left:696px;top:29px;width:1px;height:19px;background:#d4d0c8;"></div>
<div class="r" style="left:509px;top:48px;width:189px;height:1px;background:#ffffff;"></div>
<div class="r" style="left:697px;top:28px;width:1px;height:21px;background:#ffffff;"></div>
<div class="t " style="left:512.9px;top:32px;width:160.10000000000002px;height:15px;line-height:15px;text-align:left;letter-spacing:-0.98px;">SampleMACrossOver</div>
<div class="r" style="left:680px;top:30px;width:16px;height:17px;background:#d4d0c8;"></div>
<div class="r" style="left:680px;top:46px;width:16px;height:1px;background:#404040;"></div>
<div class="r" style="left:695px;top:30px;width:1px;height:17px;background:#404040;"></div>
<div class="r" style="left:681px;top:45px;width:14px;height:1px;background:#808080;"></div>
<div class="r" style="left:694px;top:31px;width:1px;height:15px;background:#808080;"></div>
<div class="r" style="left:681px;top:31px;width:13px;height:1px;background:#ffffff;"></div>
<div class="r" style="left:681px;top:31px;width:1px;height:14px;background:#ffffff;"></div>
<div class="r" style="left:684px;top:36px;width:7px;height:1px;background:#000000;"></div>
<div class="r" style="left:685px;top:37px;width:5px;height:1px;background:#000000;"></div>
<div class="r" style="left:686px;top:38px;width:3px;height:1px;background:#000000;"></div>
<div class="r" style="left:687px;top:39px;width:1px;height:1px;background:#000000;"></div>
<div class="r" style="left:429px;top:60px;width:285px;height:400px;background:#808080;"></div>
<div class="r" style="left:430px;top:61px;width:283px;height:398px;background:#d4d0c8;"></div>
<div class="r" style="left:430px;top:61px;width:267px;height:398px;overflow:hidden">
<div class="r" style="left:2px;top:4px;width:9px;height:9px;background:#000000;"></div>
<div class="r" style="left:3px;top:5px;width:7px;height:7px;background:#d4d0c8;"></div>
<div class="r" style="left:4px;top:8px;width:5px;height:1px;background:#000000;"></div>
<div class="t b" style="left:17.1px;top:2px;width:239.9px;height:15px;line-height:15px;text-align:left;letter-spacing:-0.29px;">Time frame</div>
<div class="r" style="left:14px;top:17px;width:119px;height:15px;background:#ffffff;"></div>
<div class="r" style="left:134px;top:17px;width:133px;height:15px;background:#ffffff;"></div>
<div class="t clip" style="left:17.1px;top:18px;width:114.9px;height:15px;line-height:15px;text-align:left;letter-spacing:-0.53px;">From</div>
<div class="t b clip" style="left:136.9px;top:18px;width:130.1px;height:15px;line-height:15px;text-align:left;letter-spacing:0.44px;">01.01.2004</div>
<div class="r" style="left:14px;top:33px;width:119px;height:15px;background:#ffffff;"></div>
<div class="r" style="left:134px;top:33px;width:133px;height:15px;background:#ffffff;"></div>
<div class="t clip" style="left:17.1px;top:34px;width:114.9px;height:15px;line-height:15px;text-align:left;letter-spacing:0.41px;">To</div>
<div class="t b clip" style="left:136.9px;top:34px;width:130.1px;height:15px;line-height:15px;text-align:left;letter-spacing:0.44px;">04.08.2014</div>
<div class="r" style="left:2px;top:52px;width:9px;height:9px;background:#000000;"></div>
<div class="r" style="left:3px;top:53px;width:7px;height:7px;background:#d4d0c8;"></div>
<div class="r" style="left:4px;top:56px;width:5px;height:1px;background:#000000;"></div>
<div class="t b" style="left:17.1px;top:50px;width:239.9px;height:15px;line-height:15px;text-align:left;letter-spacing:-0.05px;">General</div>
<div class="r" style="left:14px;top:65px;width:119px;height:15px;background:#ffffff;"></div>
<div class="r" style="left:134px;top:65px;width:133px;height:15px;background:#ffffff;"></div>
<div class="t clip" style="left:17.1px;top:66px;width:114.9px;height:15px;line-height:15px;text-align:left;letter-spacing:-0.37px;">Include commission</div>
<div class="t b clip" style="left:136.9px;top:66px;width:130.1px;height:15px;line-height:15px;text-align:left;letter-spacing:-0.12px;">False</div>
<div class="r" style="left:14px;top:81px;width:119px;height:15px;background:#ffffff;"></div>
<div class="r" style="left:134px;top:81px;width:133px;height:15px;background:#ffffff;"></div>
<div class="t clip" style="left:17.1px;top:82px;width:114.9px;height:15px;line-height:15px;text-align:left;letter-spacing:-0.64px;">Label</div>
<div class="t b clip" style="left:136.9px;top:82px;width:130.1px;height:15px;line-height:15px;text-align:left;letter-spacing:-0.31px;">SampleMACrossOver</div>
<div class="r" style="left:14px;top:97px;width:119px;height:15px;background:#ffffff;"></div>
<div class="r" style="left:134px;top:97px;width:133px;height:15px;background:#ffffff;"></div>
<div class="t clip" style="left:17px;top:98px;width:115px;height:15px;line-height:15px;text-align:left;">Maximum bars look back</div>
<div class="t b clip" style="left:136.9px;top:98px;width:130.1px;height:15px;line-height:15px;text-align:left;letter-spacing:-0.17px;">TwoHundredFiftySix</div>
<div class="r" style="left:14px;top:113px;width:119px;height:15px;background:#ffffff;"></div>
<div class="r" style="left:134px;top:113px;width:133px;height:15px;background:#ffffff;"></div>
<div class="t clip" style="left:17.1px;top:114px;width:114.9px;height:15px;line-height:15px;text-align:left;letter-spacing:-0.42px;">Min. bars required</div>
<div class="t b clip" style="left:137px;top:114px;width:130px;height:15px;line-height:15px;text-align:left;letter-spacing:0.35px;">100</div>
<div class="r" style="left:2px;top:132px;width:9px;height:9px;background:#000000;"></div>
<div class="r" style="left:3px;top:133px;width:7px;height:7px;background:#d4d0c8;"></div>
<div class="r" style="left:4px;top:136px;width:5px;height:1px;background:#000000;"></div>
<div class="t b" style="left:17.1px;top:130px;width:239.9px;height:15px;line-height:15px;text-align:left;letter-spacing:-0.5px;">Historical Fill Processing</div>
<div class="r" style="left:14px;top:145px;width:119px;height:15px;background:#ffffff;"></div>
<div class="r" style="left:134px;top:145px;width:133px;height:15px;background:#ffffff;"></div>
<div class="t clip" style="left:17.1px;top:146px;width:114.9px;height:15px;line-height:15px;text-align:left;letter-spacing:-0.16px;">Fill type</div>
<div class="t b clip" style="left:136.9px;top:146px;width:130.1px;height:15px;line-height:15px;text-align:left;letter-spacing:-0.03px;">Default</div>
<div class="r" style="left:14px;top:161px;width:119px;height:15px;background:#ffffff;"></div>
<div class="r" style="left:134px;top:161px;width:133px;height:15px;background:#ffffff;"></div>
<div class="t clip" style="left:17.1px;top:162px;width:114.9px;height:15px;line-height:15px;text-align:left;letter-spacing:-0.45px;">Slippage</div>
<div class="t b clip" style="left:137px;top:162px;width:130px;height:15px;line-height:15px;text-align:left;letter-spacing:0.35px;">0</div>
<div class="r" style="left:2px;top:180px;width:9px;height:9px;background:#000000;"></div>
<div class="r" style="left:3px;top:181px;width:7px;height:7px;background:#d4d0c8;"></div>
<div class="r" style="left:4px;top:184px;width:5px;height:1px;background:#000000;"></div>
<div class="t b" style="left:17.1px;top:178px;width:239.9px;height:15px;line-height:15px;text-align:left;letter-spacing:-0.2px;">Optimize</div>
<div class="r" style="left:14px;top:193px;width:119px;height:15px;background:#ffffff;"></div>
<div class="r" style="left:134px;top:193px;width:133px;height:15px;background:#ffffff;"></div>
<div class="t clip" style="left:17.1px;top:194px;width:114.9px;height:15px;line-height:15px;text-align:left;letter-spacing:-0.46px;">Keep best # results</div>
<div class="t b clip" style="left:137px;top:194px;width:130px;height:15px;line-height:15px;text-align:left;letter-spacing:0.35px;">10</div>
<div class="r" style="left:14px;top:209px;width:119px;height:15px;background:#ffffff;"></div>
<div class="r" style="left:134px;top:209px;width:133px;height:15px;background:#ffffff;"></div>
<div class="t clip" style="left:17px;top:210px;width:115px;height:15px;line-height:15px;text-align:left;">Optimization period (days)</div>
<div class="t b clip" style="left:137px;top:210px;width:130px;height:15px;line-height:15px;text-align:left;letter-spacing:0.35px;">90</div>
<div class="r" style="left:14px;top:225px;width:119px;height:15px;background:#ffffff;"></div>
<div class="r" style="left:134px;top:225px;width:133px;height:15px;background:#ffffff;"></div>
<div class="t clip" style="left:17.1px;top:226px;width:114.9px;height:15px;line-height:15px;text-align:left;letter-spacing:-0.36px;">Optimize data series</div>
<div class="t b clip" style="left:136.9px;top:226px;width:130.1px;height:15px;line-height:15px;text-align:left;letter-spacing:-0.12px;">False</div>
<div class="r" style="left:14px;top:241px;width:119px;height:15px;background:#ffffff;"></div>
<div class="r" style="left:134px;top:241px;width:133px;height:15px;background:#ffffff;"></div>
<div class="t clip" style="left:17.1px;top:242px;width:114.9px;height:15px;line-height:15px;text-align:left;letter-spacing:-0.43px;">Optimize on...</div>
<div class="t b clip" style="left:136.9px;top:242px;width:130.1px;height:15px;line-height:15px;text-align:left;letter-spacing:-0.15px;">max. net profit</div>
<div class="r" style="left:14px;top:257px;width:119px;height:15px;background:#ffffff;"></div>
<div class="r" style="left:134px;top:257px;width:133px;height:15px;background:#ffffff;"></div>
<div class="t clip" style="left:17.1px;top:258px;width:114.9px;height:15px;line-height:15px;text-align:left;letter-spacing:-0.31px;">Optimizer</div>
<div class="t b clip" style="left:136.9px;top:258px;width:130.1px;height:15px;line-height:15px;text-align:left;letter-spacing:-0.03px;">Default</div>
<div class="r" style="left:14px;top:273px;width:119px;height:15px;background:#ffffff;"></div>
<div class="r" style="left:134px;top:273px;width:133px;height:15px;background:#ffffff;"></div>
<div class="t clip" style="left:17.1px;top:274px;width:114.9px;height:15px;line-height:15px;text-align:left;letter-spacing:-0.29px;">Test period (days)</div>
<div class="t b clip" style="left:137px;top:274px;width:130px;height:15px;line-height:15px;text-align:left;letter-spacing:0.35px;">30</div>
<div class="r" style="left:2px;top:292px;width:9px;height:9px;background:#000000;"></div>
<div class="r" style="left:3px;top:293px;width:7px;height:7px;background:#d4d0c8;"></div>
<div class="r" style="left:4px;top:296px;width:5px;height:1px;background:#000000;"></div>
<div class="t b" style="left:17.1px;top:290px;width:239.9px;height:15px;line-height:15px;text-align:left;letter-spacing:-0.45px;">Order Handling</div>
<div class="r" style="left:14px;top:305px;width:119px;height:15px;background:#ffffff;"></div>
<div class="r" style="left:134px;top:305px;width:133px;height:15px;background:#ffffff;"></div>
<div class="t clip" style="left:17.1px;top:306px;width:114.9px;height:15px;line-height:15px;text-align:left;letter-spacing:-0.33px;">Entries per direction</div>
<div class="t b clip" style="left:137px;top:306px;width:130px;height:15px;line-height:15px;text-align:left;letter-spacing:0.35px;">1</div>
<div class="r" style="left:14px;top:321px;width:119px;height:15px;background:#ffffff;"></div>
<div class="r" style="left:134px;top:321px;width:133px;height:15px;background:#ffffff;"></div>
<div class="t clip" style="left:17.1px;top:322px;width:114.9px;height:15px;line-height:15px;text-align:left;letter-spacing:-0.44px;">Entry handling</div>
<div class="t b clip" style="left:136.9px;top:322px;width:130.1px;height:15px;line-height:15px;text-align:left;letter-spacing:-0.28px;">AllEntries</div>
<div class="r" style="left:14px;top:337px;width:119px;height:15px;background:#ffffff;"></div>
<div class="r" style="left:134px;top:337px;width:133px;height:15px;background:#ffffff;"></div>
<div class="t clip" style="left:17.1px;top:338px;width:114.9px;height:15px;line-height:15px;text-align:left;letter-spacing:-0.3px;">Exit on close</div>
<div class="t b clip" style="left:137.5px;top:338px;width:129.5px;height:15px;line-height:15px;text-align:left;letter-spacing:0.22px;">True</div>
<div class="r" style="left:2px;top:356px;width:9px;height:9px;background:#000000;"></div>
<div class="r" style="left:3px;top:357px;width:7px;height:7px;background:#d4d0c8;"></div>
<div class="r" style="left:4px;top:360px;width:5px;height:1px;background:#000000;"></div>
<div class="t b" style="left:17.1px;top:354px;width:239.9px;height:15px;line-height:15px;text-align:left;letter-spacing:-0.43px;">Order Properties</div>
<div class="r" style="left:14px;top:369px;width:119px;height:15px;background:#ffffff;"></div>
<div class="r" style="left:134px;top:369px;width:133px;height:15px;background:#ffffff;"></div>
<div class="t clip" style="left:17.1px;top:370px;width:114.9px;height:15px;line-height:15px;text-align:left;letter-spacing:-0.45px;">Default quantity</div>
<div class="t b clip" style="left:137px;top:370px;width:130px;height:15px;line-height:15px;text-align:left;letter-spacing:0.35px;">1</div>
<div class="r" style="left:14px;top:385px;width:119px;height:15px;background:#ffffff;"></div>
<div class="r" style="left:134px;top:385px;width:133px;height:15px;background:#ffffff;"></div>
<div class="t clip" style="left:17.1px;top:386px;width:114.9px;height:15px;line-height:15px;text-align:left;letter-spacing:-0.45px;">Set order quantity</div>
<div class="t b clip" style="left:136.9px;top:386px;width:130.1px;height:15px;line-height:15px;text-align:left;letter-spacing:-0.09px;">by default quantity</div>
</div>
<div class="r chk" style="left:697px;top:61px;width:16px;height:398px;background-position:-1px -1px"></div>
<div class="r" style="left:697px;top:61px;width:16px;height:16px;background:#d4d0c8;"></div>
<div class="r" style="left:697px;top:76px;width:16px;height:1px;background:#404040;"></div>
<div class="r" style="left:712px;top:61px;width:1px;height:16px;background:#404040;"></div>
<div class="r" style="left:698px;top:75px;width:14px;height:1px;background:#808080;"></div>
<div class="r" style="left:711px;top:62px;width:1px;height:14px;background:#808080;"></div>
<div class="r" style="left:698px;top:62px;width:13px;height:1px;background:#ffffff;"></div>
<div class="r" style="left:698px;top:62px;width:1px;height:13px;background:#ffffff;"></div>
<div class="r" style="left:704px;top:67px;width:1px;height:1px;background:#000000;"></div>
<div class="r" style="left:703px;top:68px;width:3px;height:1px;background:#000000;"></div>
<div class="r" style="left:702px;top:69px;width:5px;height:1px;background:#000000;"></div>
<div class="r" style="left:701px;top:70px;width:7px;height:1px;background:#000000;"></div>
<div class="r" style="left:697px;top:155px;width:16px;height:266px;background:#d4d0c8;"></div>
<div class="r" style="left:697px;top:420px;width:16px;height:1px;background:#404040;"></div>
<div class="r" style="left:712px;top:155px;width:1px;height:266px;background:#404040;"></div>
<div class="r" style="left:698px;top:419px;width:14px;height:1px;background:#808080;"></div>
<div class="r" style="left:711px;top:156px;width:1px;height:264px;background:#808080;"></div>
<div class="r" style="left:698px;top:156px;width:13px;height:1px;background:#ffffff;"></div>
<div class="r" style="left:698px;top:156px;width:1px;height:263px;background:#ffffff;"></div>
<div class="r" style="left:697px;top:443px;width:16px;height:16px;background:#d4d0c8;"></div>
<div class="r" style="left:697px;top:458px;width:16px;height:1px;background:#404040;"></div>
<div class="r" style="left:712px;top:443px;width:1px;height:16px;background:#404040;"></div>
<div class="r" style="left:698px;top:457px;width:14px;height:1px;background:#808080;"></div>
<div class="r" style="left:711px;top:444px;width:1px;height:14px;background:#808080;"></div>
<div class="r" style="left:698px;top:444px;width:13px;height:1px;background:#ffffff;"></div>
<div class="r" style="left:698px;top:444px;width:1px;height:13px;background:#ffffff;"></div>
<div class="r" style="left:701px;top:449px;width:7px;height:1px;background:#000000;"></div>
<div class="r" style="left:702px;top:450px;width:5px;height:1px;background:#000000;"></div>
<div class="r" style="left:703px;top:451px;width:3px;height:1px;background:#000000;"></div>
<div class="r" style="left:704px;top:452px;width:1px;height:1px;background:#000000;"></div>
<div class="r" style="left:429px;top:463px;width:285px;height:59px;background:#808080;"></div>
<div class="r" style="left:430px;top:464px;width:283px;height:57px;background:#d4d0c8;"></div>
<div class="t b" style="left:434.0px;top:466px;width:250.0px;height:15px;line-height:15px;text-align:left;letter-spacing:-0.48px;">Historical Fill Processing</div>
<div class="r" style="left:429px;top:522px;width:284px;height:1px;background:#ffffff;"></div>
<div class="r" style="left:429px;top:522px;width:1px;height:25px;background:#ffffff;"></div>
<div class="r" style="left:429px;top:547px;width:285px;height:1px;background:#404040;"></div>
<div class="r" style="left:713px;top:522px;width:1px;height:26px;background:#404040;"></div>
<div class="r" style="left:430px;top:546px;width:283px;height:1px;background:#808080;"></div>
<div class="r" style="left:712px;top:523px;width:1px;height:24px;background:#808080;"></div>
<div class="t " style="left:429px;top:523px;width:285px;height:24px;line-height:24px;text-align:center;letter-spacing:-0.35px;">Run Walk Forward Optimization</div>
<div class="r" style="left:0px;top:549px;width:717px;height:1px;background:#cac7c0;"></div>
<div class="r" style="left:0px;top:550px;width:717px;height:1px;background:#808080;"></div>
<div class="r" style="left:0px;top:551px;width:717px;height:1px;background:#404040;"></div>
</body></html>
